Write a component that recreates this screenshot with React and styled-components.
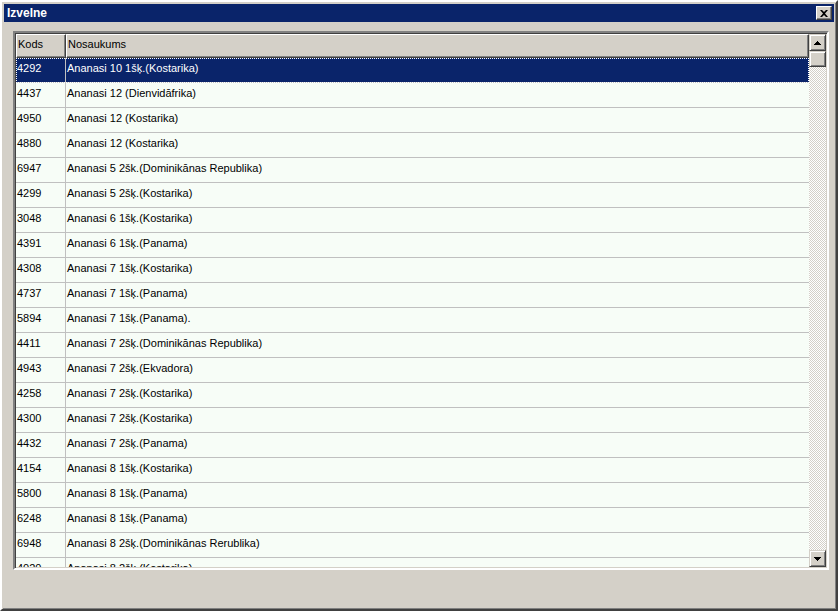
import React from 'react';
import styled, { createGlobalStyle } from 'styled-components';

const Global = createGlobalStyle`
  html, body { margin: 0; padding: 0; overflow: hidden; background: #d4d0c8; }
  * { box-sizing: border-box; }
`;

const Window = styled.div`
  width: 838px;
  height: 611px;
  background: #d4d0c8;
  border: 2px solid;
  border-color: #ffffff #404040 #404040 #ffffff;
  box-shadow: inset 1px 1px 0 #d4d0c8, inset -1px -1px 0 #808080;
  padding: 2px;
  display: flex;
  flex-direction: column;
  font-family: "Liberation Sans", Arial, sans-serif;
  font-size: 11px;
`;

const TitleBar = styled.div`
  flex: none;
  height: 18px;
  background: #0a246a;
  display: flex;
  align-items: center;
  justify-content: space-between;
  padding: 0 2px 0 3px;
`;

const Title = styled.span`
  color: #fff;
  font-weight: bold;
  font-size: 12px;
`;

const CloseBtn = styled.div`
  width: 16px;
  height: 14px;
  background: #d4d0c8;
  border: 1px solid;
  border-color: #ffffff #404040 #404040 #ffffff;
  box-shadow: inset -1px -1px 0 #808080;
  display: flex;
  align-items: center;
  justify-content: center;
`;

const Body = styled.div`
  flex: 1;
  min-height: 0;
  padding: 9px 5px 37px 9px;
  display: flex;
`;

const Grid = styled.div`
  flex: 1;
  min-height: 0;
  display: flex;
  border: 2px solid;
  border-color: #808080 #ffffff #ffffff #808080;
  box-shadow: inset 1px 1px 0 #404040, inset -1px -1px 0 #d4d0c8;
  padding: 1px;
  background: #808080;
`;

const Table = styled.div`
  flex: 1;
  overflow: hidden;
  background: #808080;
`;

const HeaderRow = styled.div`
  display: flex;
  height: 24px;
`;

const HeaderCell = styled.div`
  width: ${p => p.$w ? p.$w + 'px' : 'auto'};
  flex: ${p => p.$w ? 'none' : 1};
  background: #d4d0c8;
  border: 1px solid;
  border-color: #ffffff #404040 #404040 #ffffff;
  box-shadow: inset -1px -1px 0 #808080;
  color: #000;
  padding: 3px 0 0 1px;
`;

const Row = styled.div`
  display: flex;
  height: 25px;
  background: ${p => p.$sel ? '#0a246a' : '#f7fdf7'};
  color: ${p => p.$sel ? '#fff' : '#000'};
  border-bottom: 1px solid #c0c0c0;
  outline: ${p => p.$sel ? '1px dotted #ffffff' : 'none'};
  outline-offset: -1px;
`;

const Cell = styled.div`
  width: ${p => p.$w ? p.$w + 'px' : 'auto'};
  flex: ${p => p.$w ? 'none' : 1};
  border-right: ${p => p.$w ? '1px solid #c0c0c0' : 'none'};
  padding: 4px 0 0 1px;
  white-space: nowrap;
`;

const ScrollBar = styled.div`
  width: 17px;
  display: flex;
  flex-direction: column;
  background-color: #ece9e4;
  background-image: repeating-conic-gradient(#d4d0c8 0 25%, #ffffff 0 50%);
  background-size: 2px 2px;
`;

const ScrollButton = styled.div`
  flex: none;
  height: ${p => p.$h || 17}px;
  background: #d4d0c8;
  border: 1px solid;
  border-color: #d4d0c8 #404040 #404040 #d4d0c8;
  box-shadow: inset 1px 1px 0 #ffffff, inset -1px -1px 0 #808080;
  display: flex;
  align-items: center;
  justify-content: center;
`;

const Track = styled.div`
  flex: 1;
`;

const rows = [
  ['4292', 'Ananasi 10 1šķ.(Kostarika)'],
  ['4437', 'Ananasi 12 (Dienvidāfrika)'],
  ['4950', 'Ananasi 12 (Kostarika)'],
  ['4880', 'Ananasi 12 (Kostarika)'],
  ['6947', 'Ananasi 5 2šk.(Dominikānas Republika)'],
  ['4299', 'Ananasi 5 2šķ.(Kostarika)'],
  ['3048', 'Ananasi 6 1šķ.(Kostarika)'],
  ['4391', 'Ananasi 6 1šķ.(Panama)'],
  ['4308', 'Ananasi 7 1šķ.(Kostarika)'],
  ['4737', 'Ananasi 7 1šķ.(Panama)'],
  ['5894', 'Ananasi 7 1šķ.(Panama).'],
  ['4411', 'Ananasi 7 2šķ.(Dominikānas Republika)'],
  ['4943', 'Ananasi 7 2šķ.(Ekvadora)'],
  ['4258', 'Ananasi 7 2šķ.(Kostarika)'],
  ['4300', 'Ananasi 7 2šķ.(Kostarika)'],
  ['4432', 'Ananasi 7 2šķ.(Panama)'],
  ['4154', 'Ananasi 8 1šķ.(Kostarika)'],
  ['5800', 'Ananasi 8 1šķ.(Panama)'],
  ['6248', 'Ananasi 8 1šķ.(Panama)'],
  ['6948', 'Ananasi 8 2šķ.(Dominikānas Rerublika)'],
  ['4020', 'Ananasi 8 2šķ.(Kostarika)'],
];

const Arrow = ({ up }) => (
  <svg width="7" height="4" viewBox="0 0 7 4">
    <path d={up ? 'M3 0h1v1h1v1h1v1h1v1H0V3h1V2h1V1h1z' : 'M0 0h7v1H6v1H5v1H4v1H3V3H2V2H1V1H0z'} fill="#000" />
  </svg>
);

export default function App() {
  return (
    <Window>
      <Global />
      <TitleBar>
        <Title>Izvelne</Title>
        <CloseBtn>
          <svg width="8" height="7" viewBox="0 0 8 7">
            <path d="M0 0h2l2 2 2-2h2L5 3.5 8 7H6L4 5 2 7H0l3-3.5z" fill="#000" />
          </svg>
        </CloseBtn>
      </TitleBar>
      <Body>
        <Grid>
          <Table>
            <HeaderRow>
              <HeaderCell $w={50}>Kods</HeaderCell>
              <HeaderCell>Nosaukums</HeaderCell>
            </HeaderRow>
            {rows.map((r, i) => (
              <Row key={i} $sel={i === 0}>
                <Cell $w={50}>{r[0]}</Cell>
                <Cell>{r[1]}</Cell>
              </Row>
            ))}
          </Table>
          <ScrollBar>
            <ScrollButton><Arrow up /></ScrollButton>
            <ScrollButton $h={16} />
            <Track />
            <ScrollButton><Arrow /></ScrollButton>
          </ScrollBar>
        </Grid>
      </Body>
    </Window>
  );
}
